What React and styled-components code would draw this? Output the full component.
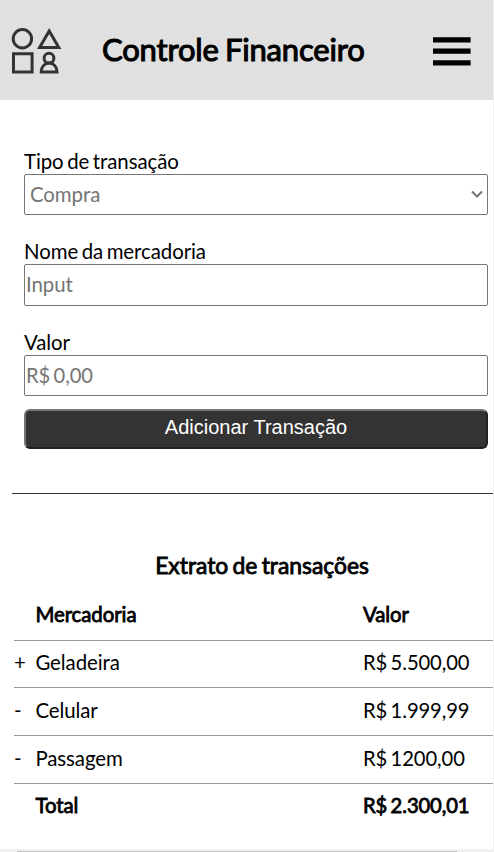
import React from 'react';
import styled, { createGlobalStyle } from 'styled-components';

const GlobalStyle = createGlobalStyle`
  * { box-sizing: border-box; }
  body {
    margin: 0;
    background: #fff;
    color: #000;
    font: 20.4px/24px Lato, sans-serif;
    word-spacing: -1.6px;
    letter-spacing: -0.06px;
    overflow: hidden;
  }
`;

const Viewport = styled.div`
  display: grid;
  grid-template: 849px 3px / 493px 1px;
  width: 494px;
  height: 852px;
  overflow: hidden;
`;

const Page = styled.div`
  display: flex;
  flex-direction: column;
  overflow: hidden;
`;

const VerticalTrack = styled.div`
  background: #f1f1f1;
`;

const HorizontalTrack = styled.div`
  grid-column: 1 / -1;
  background: #f1f1f1;
  padding: 2px 37px 0 17px;
`;

const Thumb = styled.div`
  height: 1px;
  background: #c1c1c1;
`;

const Header = styled.header`
  display: grid;
  grid-template-columns: 91px 1fr 38px;
  align-items: center;
  flex: none;
  height: 100px;
  padding: 0 22px 0 11px;
  background: #e0e0e0;
`;

const Logo = styled.svg`
  width: 52px;
  height: 50px;
  margin-top: 1px;
  fill: none;
  stroke: #333;
  stroke-width: 3;
`;

const Title = styled.h1`
  margin: 0 0 3px;
  font-size: 31px;
  font-weight: 400;
  line-height: 40px;
  word-spacing: -1.5px;
  letter-spacing: -0.18px;
  -webkit-text-stroke: 1.1px #000;
`;

const MenuIcon = styled.svg`
  width: 38px;
  height: 30px;
  margin-top: 2px;
`;

const Form = styled.form`
  display: flex;
  flex-direction: column;
  flex: none;
  height: 394px;
  margin-left: 12px;
  padding: 49px 5px 0 12px;
  border-bottom: 1px solid #333;
`;

const Field = styled.label`
  display: flex;
  flex-direction: column;
  gap: 1px;
  height: ${({ $height }) => $height}px;
`;

const Control = styled.span`
  display: flex;
  align-items: center;
  justify-content: space-between;
  flex: none;
  height: ${({ $height = 41 }) => $height}px;
  padding: 0 4px 2px ${({ $inset = 2 }) => $inset - 1}px;
  border: 1px solid #767676;
  border-radius: 2px;
  color: #757575;
`;

const Chevron = styled.svg`
  width: 12px;
  height: 8px;
  margin-top: 1px;
  fill: none;
  stroke: #757575;
  stroke-width: 2;
`;

const SubmitButton = styled.button`
  flex: none;
  height: 40px;
  margin-top: 1px;
  padding: 0 0 4px;
  border: 2px outset #767676;
  border-radius: 6px;
  background: #333;
  color: #fff;
  font: 20px "Liberation Sans", Arial, sans-serif;
  word-spacing: 0;
`;

const Statement = styled.section`
  display: flex;
  flex-direction: column;
  padding: 57px 0 0 14px;
`;

const StatementTitle = styled.h2`
  margin: 0 0 21px;
  padding-left: 17px;
  font-size: 22.9px;
  font-weight: 400;
  line-height: 28px;
  text-align: center;
  word-spacing: -1.5px;
  letter-spacing: -0.04px;
  -webkit-text-stroke: 0.85px #000;
`;

const Row = styled.div`
  display: grid;
  grid-template-columns: 21.4px 327.6px 1fr;
  align-items: center;
  height: ${({ $height = 48 }) => $height}px;
  padding-bottom: ${({ $lift = 3 }) => $lift}px;
  border-bottom: ${({ $last }) => ($last ? 0 : 1)}px solid #999;
  -webkit-text-stroke: ${({ $bold }) => ($bold ? 0.8 : 0)}px #000;
`;

const Amount = styled.span`
  font-size: 20.2px;
  letter-spacing: -0.1px;
`;

const transactions = [
  { sign: '+', name: 'Geladeira', value: 'R$ 5.500,00', height: 47, lift: 4 },
  { sign: '-', name: 'Celular', value: 'R$ 1.999,99', height: 48, lift: 3 },
  { sign: '-', name: 'Passagem', value: 'R$ 1200,00', height: 48, lift: 3 },
];

export default function App() {
  return (
    <>
      <GlobalStyle />
      <Viewport>
        <Page>
          <Header>
            <Logo viewBox="0 0 52 50">
              <circle cx="11.4" cy="12.8" r="9.2" />
              <path d="M38.2 4.9 47.8 21.6H28.6Z" />
              <path d="M2.5 27.7h18.6v18.2H2.5Z" />
              <circle cx="38" cy="32.2" r="4.9" />
              <path d="M30.2 45.9c0-5 3.3-8.8 7.9-8.8s7.9 3.8 7.9 8.8Z" />
            </Logo>
            <Title>Controle Financeiro</Title>
            <MenuIcon viewBox="0 0 38 30">
              <path d="M0 1.2h37.6v5.4H0ZM0 12.4h37.6v5.4H0ZM0 24.2h37.6v5.4H0Z" />
            </MenuIcon>
          </Header>
          <Form>
            <Field $height={90}>
              Tipo de transação
              <Control $inset={6}>
                Compra
                <Chevron viewBox="0 0 12 8">
                  <path d="m1 1.5 5 5 5-5" />
                </Chevron>
              </Control>
            </Field>
            <Field $height={91}>
              Nome da mercadoria
              <Control $height={42}>Input</Control>
            </Field>
            <Field $height={78}>
              Valor
              <Control>
                <Amount>R$ 0,00</Amount>
              </Control>
            </Field>
            <SubmitButton type="button">Adicionar Transação</SubmitButton>
          </Form>
          <Statement>
            <StatementTitle>Extrato de transações</StatementTitle>
            <Row $bold $height={41} $lift={13}>
              <span />
              <span>Mercadoria</span>
              <span>Valor</span>
            </Row>
            {transactions.map((t) => (
              <Row key={t.name} $height={t.height} $lift={t.lift}>
                <span>{t.sign}</span>
                <span>{t.name}</span>
                <Amount>{t.value}</Amount>
              </Row>
            ))}
            <Row $bold $last $height={44}>
              <span />
              <span>Total</span>
              <Amount>R$ 2.300,01</Amount>
            </Row>
          </Statement>
        </Page>
        <VerticalTrack />
        <HorizontalTrack>
          <Thumb />
        </HorizontalTrack>
      </Viewport>
    </>
  );
}
